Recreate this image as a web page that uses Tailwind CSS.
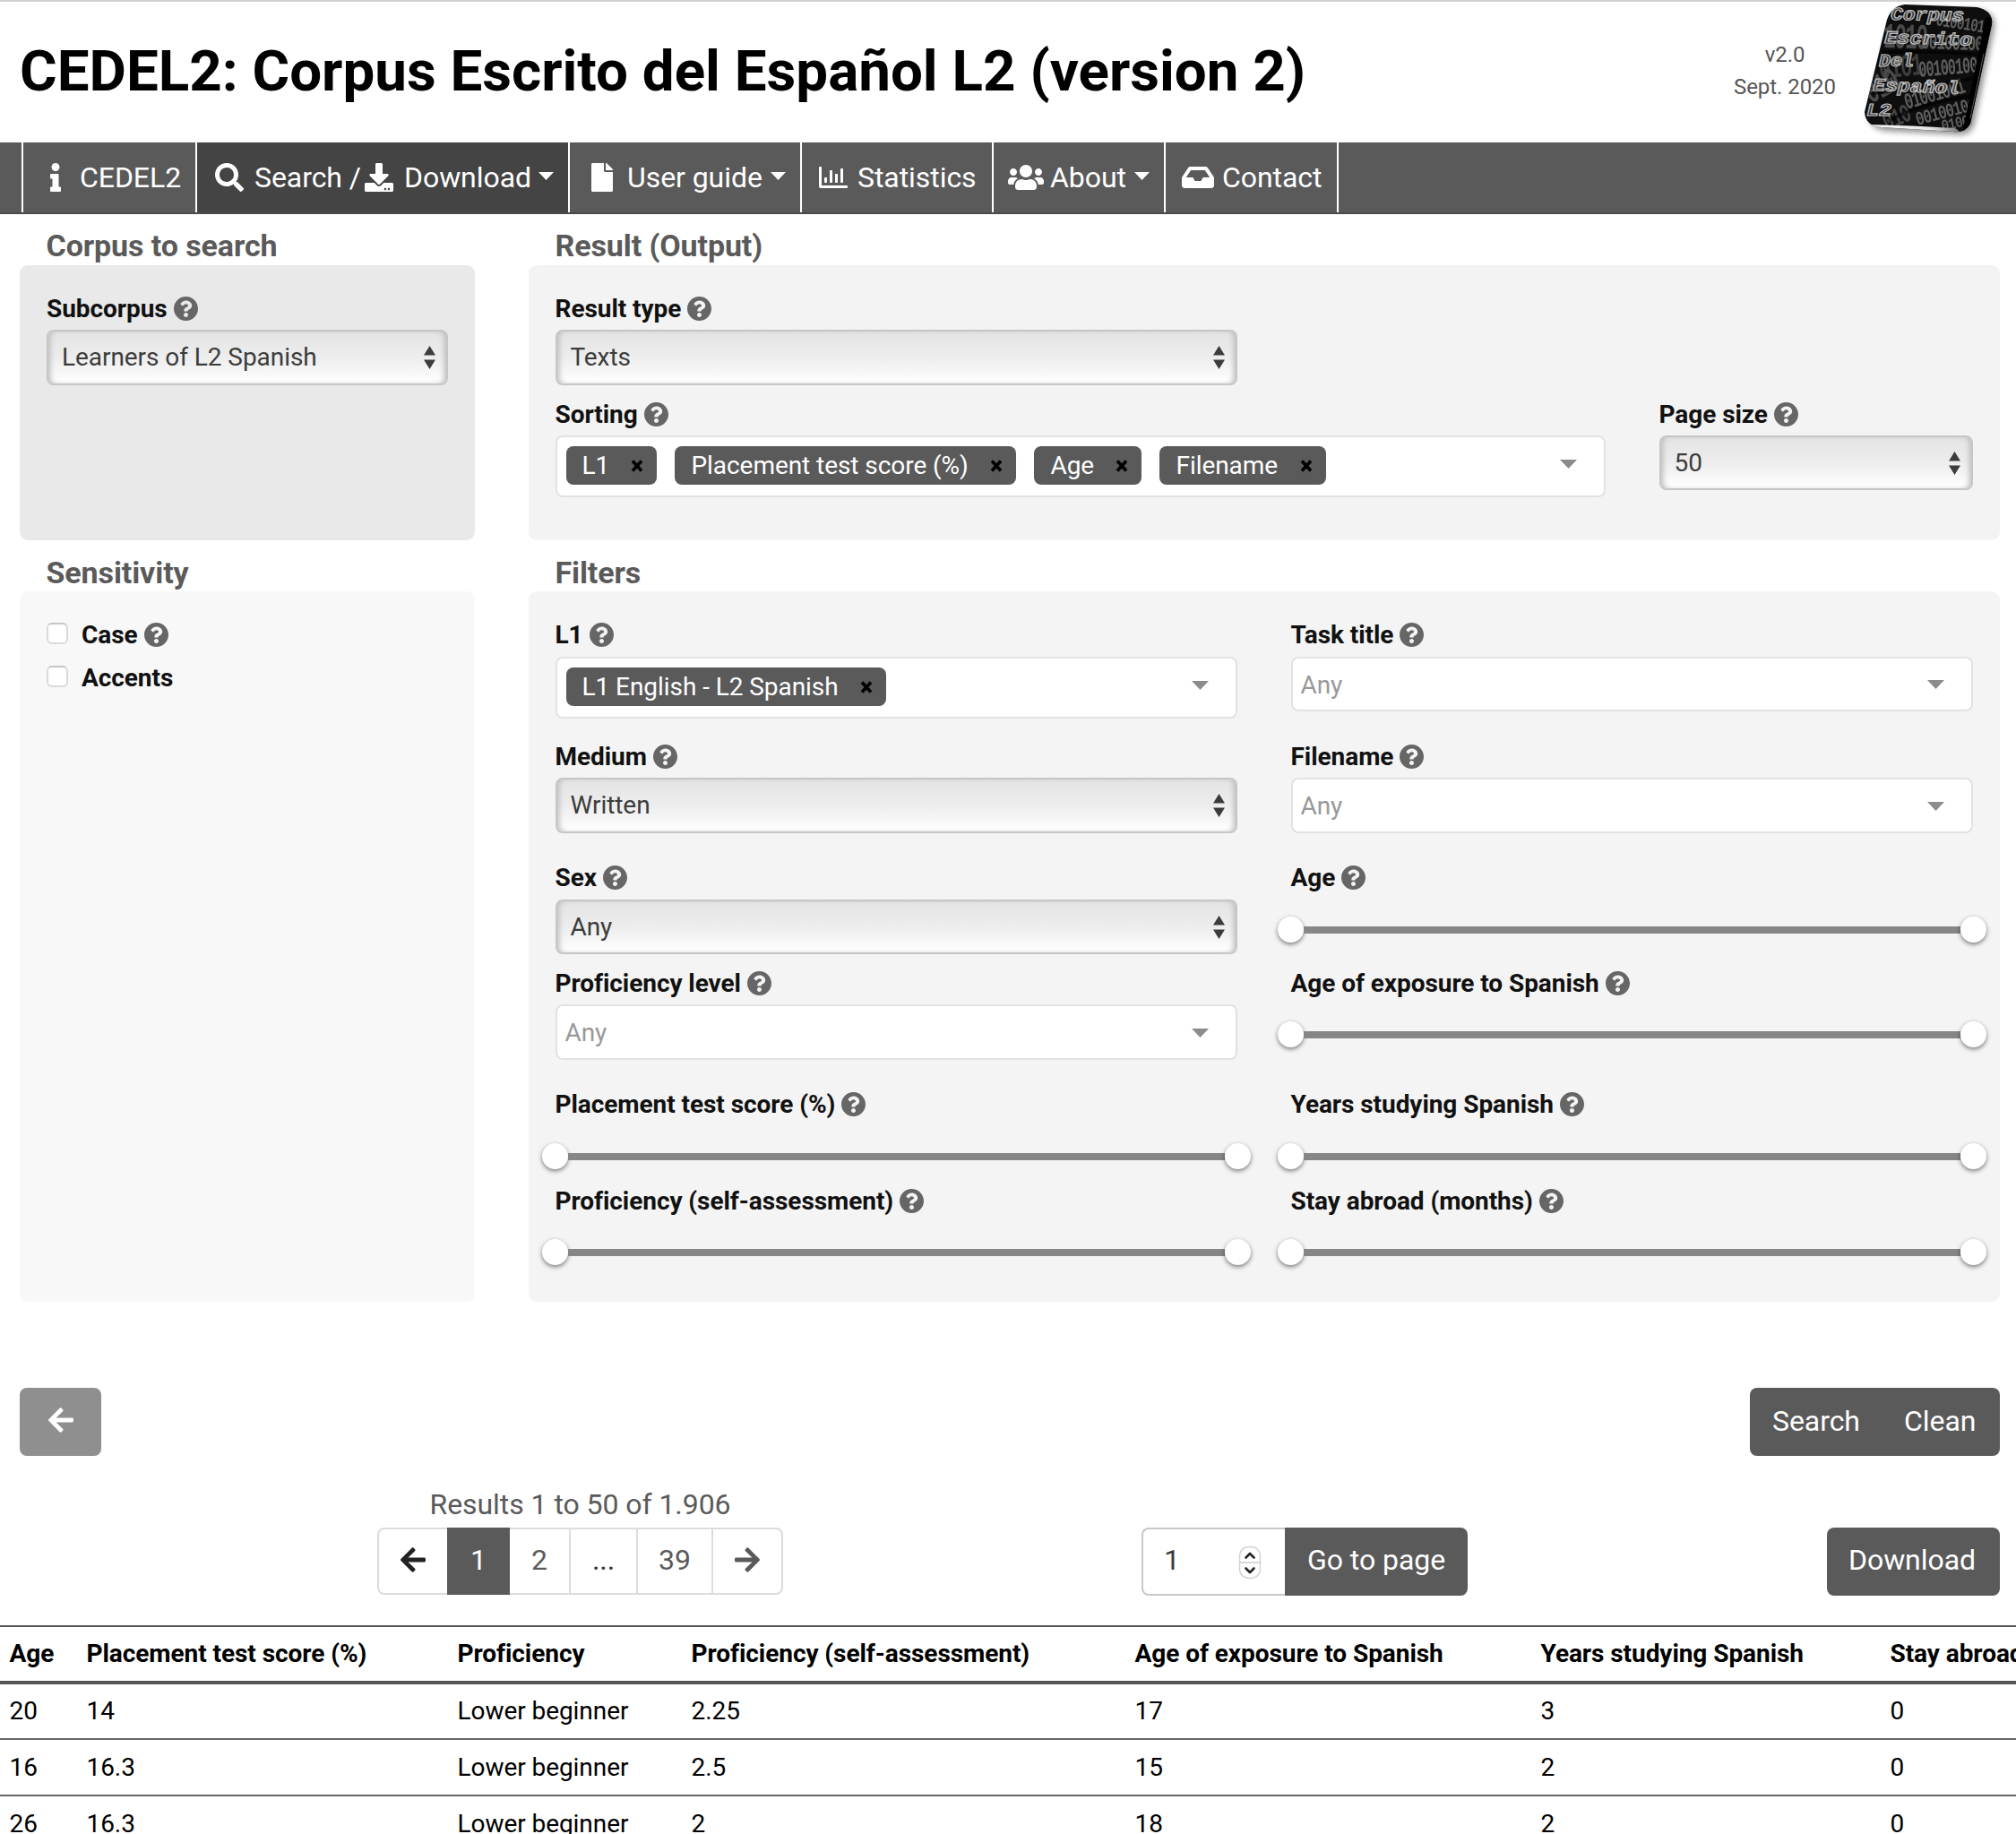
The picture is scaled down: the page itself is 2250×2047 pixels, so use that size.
<!DOCTYPE html>
<html lang="en">
<head>
<meta charset="utf-8">
<title>CEDEL2</title>
<script src="https://cdn.jsdelivr.net/npm/@tailwindcss/browser@4"></script>
</head>
<body class="w-[2250px] h-[2047px] overflow-hidden bg-white font-['Roboto',sans-serif] text-[28px] leading-[42px] tracking-[-0.06px] text-[#111]">

<!-- icon sprite -->
<svg class="hidden">
  <symbol id="q" viewBox="8 8 496 496"><path fill="currentColor" d="M504 256c0 136.997-111.043 248-248 248S8 392.997 8 256C8 119.083 119.043 8 256 8s248 111.083 248 248zM262.655 90c-54.497 0-89.255 22.957-116.549 63.758-3.536 5.286-2.353 12.415 2.715 16.258l34.699 26.31c5.205 3.947 12.621 3.008 16.665-2.122 17.864-22.658 30.113-35.797 57.303-35.797 20.429 0 45.698 13.148 45.698 32.958 0 14.976-12.363 22.667-32.534 33.976C247.128 238.528 216 254.941 216 296v4c0 6.627 5.373 12 12 12h56c6.627 0 12-5.373 12-12v-1.333c0-28.462 83.186-29.647 83.186-106.667 0-58.002-60.165-102-116.531-102zM256 338c-25.365 0-46 20.635-46 46 0 25.364 20.635 46 46 46s46-20.636 46-46c0-25.365-20.635-46-46-46z"/></symbol>
  <symbol id="left" viewBox="0 0 448 512"><path fill="currentColor" d="M257.5 445.1l-22.2 22.2c-9.4 9.4-24.6 9.4-33.9 0L7 273c-9.4-9.4-9.4-24.6 0-33.9L201.4 44.7c9.4-9.4 24.6-9.4 33.9 0l22.2 22.2c9.5 9.5 9.3 25-.4 34.3L136.6 216H424c13.3 0 24 10.7 24 24v32c0 13.3-10.7 24-24 24H136.6l120.5 114.8c9.8 9.3 10 24.8.4 34.3z"/></symbol>
  <symbol id="ud" viewBox="0 0 13 26"><path fill="#3c3c3c" d="M6.5 0L13 10.500H0zM0 15.500h13L6.500 26z"/></symbol>
  <symbol id="dn" viewBox="0 0 19 10"><path fill="currentColor" d="M0 0h19l-9.500 10z"/></symbol>
  <symbol id="x" viewBox="0 0 14 14"><path stroke="#000" stroke-width="3.600" d="M2 1.500l10 11M12 1.500l-10 11"/></symbol>
</svg>

<header class="flex h-[159px] border-t-2 border-[#d2d2d2] pl-[22px]">
  <h1 class="mt-[30px] w-[1829px] text-[63.7px] leading-[96px] font-bold tracking-normal text-black">CEDEL2: Corpus Escrito del Español L2 (version 2)</h1>
  <div class="mt-[41px] w-[282px] text-center text-2xl leading-9 text-[#565656]">v2.0<br>Sept. 2020</div>
  <svg class="-ml-[73px] -mt-[2px]" width="190" height="159" viewBox="0 0 190 159">
    <defs>
      <clipPath id="tile"><path d="M66 5L146 8Q165 12 163 27L139 138Q133 149 120 147L40 142Q22 141 21 125L46 22Q51 7 66 5Z"/></clipPath>
      <filter id="soft" x="-20%" y="-20%" width="140%" height="140%"><feGaussianBlur stdDeviation="3.500"/></filter>
      <filter id="haze"><feGaussianBlur stdDeviation=".6"/></filter>
      <linearGradient id="edge" x1="0" x2="1"><stop offset="0" stop-color="#fff"/><stop offset=".7" stop-color="#e4e4e4"/><stop offset="1" stop-color="#777"/></linearGradient>
    </defs>
    <path filter="url(#soft)" opacity=".45" fill="#000" d="M70 9L149 11Q168 15 166 30L143 140Q138 152 124 150L45 146Q27 144 26 128L50 24Q56 10 70 9Z"/>
    <g clip-path="url(#tile)">
      <path fill="#0e0e0e" d="M0 0h190v159H0z"/>
      <g filter="url(#haze)" fill="#5e5e5e" font-family="Liberation Mono" font-weight="bold" font-size="16" letter-spacing="-1">
        <text transform="translate(100 28) rotate(9) scale(.9 1.300)">0100101</text>
        <text transform="translate(42 53) rotate(2) scale(1.400 2.500)" fill="#4c4c4c">1010</text>
        <text transform="translate(84 54) rotate(2) scale(1 1.500)">001001001</text>
        <text transform="translate(38 88) rotate(-6) scale(1.400 2.200)" fill="#3c3c3c">0101</text>
        <text transform="translate(82 86) rotate(-5) scale(.95 1.600)">001001001</text>
        <text transform="translate(68 122) rotate(-16) scale(1 1.600)">01001001</text>
        <text transform="translate(28 116) rotate(-28) scale(1.500 2.500)" fill="#4c4c4c">010</text>
        <text transform="translate(80 140) rotate(-15) scale(1 1.350)">00100101</text>
        <text transform="translate(108 146) rotate(-12) scale(.9 1.100)">01001</text>
        <text transform="translate(46 146) rotate(-24) scale(1.200 1.800)" fill="#444">010</text>
      </g>
      <path fill="none" stroke="#000" stroke-opacity=".6" stroke-width="4" d="M40 58Q100 56 160 62M30 104Q90 98 150 86M50 134Q90 112 150 106"/>
      <path stroke="#000" stroke-width="12" d="M162 20L136 150"/>
      <path stroke="#555" stroke-width="1" d="M154 60L139 132"/>
      <path fill="url(#edge)" d="M25 139Q75 140 121 143Q126 144 128 150L20 152Z"/>
      <g fill="#3a3a3a" stroke="#c2c2c2" stroke-width="1.100" font-family="Liberation Mono" font-weight="bold" font-style="italic" font-size="20">
        <text transform="translate(50 22) rotate(1)" textLength="82" lengthAdjust="spacingAndGlyphs">Corpus</text>
        <text transform="translate(43 48) rotate(1.500)" textLength="98" lengthAdjust="spacingAndGlyphs">Escrito</text>
        <text transform="translate(37 74)" textLength="39" lengthAdjust="spacingAndGlyphs">Del</text>
        <text transform="translate(30 101) rotate(2)" textLength="97" lengthAdjust="spacingAndGlyphs">Español</text>
        <text transform="translate(23 129)" textLength="28" lengthAdjust="spacingAndGlyphs">L2</text>
      </g>
    </g>
  </svg>
</header>

<nav class="flex h-[80px] items-stretch border-b-2 border-[#4a4a4a] bg-[#5a5a5a] pl-6 text-[32px] leading-[76px] whitespace-nowrap text-white">
  <a class="flex w-[194px] items-center border-l-2 border-white pl-[30px]">
    <svg width="12" height="32" viewBox="0 0 192 512"><path fill="currentColor" d="M20 424.229h20V279.771H20c-11.046 0-20-8.954-20-20V212c0-11.046 8.954-20 20-20h112c11.046 0 20 8.954 20 20v212.229h20c11.046 0 20 8.954 20 20V492c0 11.046-8.954 20-20 20H20c-11.046 0-20-8.954-20-20v-47.771c0-11.046 8.954-20 20-20zM96 0C56.235 0 24 32.235 24 72s32.235 72 72 72 72-32.235 72-72S135.764 0 96 0z"/></svg>
    <span class="ml-[21px]">CEDEL2</span>
  </a>
  <a class="flex w-[416px] items-center border-l-2 border-white bg-[#444] pl-5">
    <svg width="32" height="32" viewBox="0 0 512 512"><path fill="currentColor" d="M505 442.700L405.300 343c-4.500-4.500-10.600-7-17-7H372c27.600-35.300 44-79.700 44-128C416 93.100 322.900 0 208 0S0 93.100 0 208s93.100 208 208 208c48.300 0 92.700-16.400 128-44v16.300c0 6.400 2.500 12.500 7 17l99.700 99.700c9.400 9.400 24.600 9.400 33.900 0l28.300-28.300c9.400-9.400 9.400-24.600.1-34zM208 336c-70.700 0-128-57.200-128-128 0-70.700 57.200-128 128-128 70.700 0 128 57.200 128 128 0 70.700-57.200 128-128 128z"/></svg>
    <span class="ml-[12px] w-[123px]">Search /</span>
    <svg width="32" height="32" viewBox="0 0 512 512"><path fill="currentColor" d="M216 0h80c13.300 0 24 10.700 24 24v168h87.700c17.800 0 26.700 21.500 14.100 34.100L269.700 378.300c-7.500 7.500-19.800 7.500-27.300 0L90.100 226.100c-12.600-12.600-3.700-34.100 14.100-34.100H192V24c0-13.300 10.700-24 24-24zm296 376v112c0 13.300-10.700 24-24 24H24c-13.300 0-24-10.700-24-24V376c0-13.300 10.700-24 24-24h146.700l49 49c20.100 20.100 52.500 20.100 72.600 0l49-49H488c13.300 0 24 10.700 24 24zm-124 88c0-11-9-20-20-20s-20 9-20 20 9 20 20 20 20-9 20-20zm64 0c0-11-9-20-20-20s-20 9-20 20 9 20 20 20 20-9 20-20z"/></svg>
    <span class="ml-[12px] w-[150px]">Download</span>
    <svg class="mb-1" width="17" height="9" viewBox="0 0 19 10"><use href="#dn"/></svg>
  </a>
  <a class="flex w-[259px] items-center border-l-2 border-white pl-[24px]">
    <svg width="24" height="32" viewBox="0 0 384 512"><path fill="currentColor" d="M224 136V0H24C10.700 0 0 10.700 0 24v464c0 13.300 10.700 24 24 24h336c13.300 0 24-10.700 24-24V160H248c-13.200 0-24-10.800-24-24zm160-14.100v6.100H256V0h6.100c6.400 0 12.500 2.500 17 7l97.900 98c4.500 4.500 7 10.600 7 16.900z"/></svg>
    <span class="ml-[16px] w-[160px]">User guide</span>
    <svg class="mb-1" width="17" height="9" viewBox="0 0 19 10"><use href="#dn"/></svg>
  </a>
  <a class="flex w-[214px] items-center border-l-2 border-white pl-[19px]">
    <svg width="32" height="32" viewBox="0 0 512 512"><path fill="currentColor" d="M396.800 352h22.400c6.400 0 12.800-6.400 12.800-12.800V108.800c0-6.400-6.400-12.800-12.800-12.800h-22.400c-6.400 0-12.800 6.400-12.800 12.800v230.400c0 6.400 6.400 12.800 12.800 12.800zm-192 0h22.400c6.400 0 12.800-6.400 12.800-12.800V140.800c0-6.400-6.400-12.800-12.800-12.800h-22.400c-6.400 0-12.800 6.400-12.800 12.800v198.400c0 6.400 6.400 12.800 12.800 12.800zm96 0h22.400c6.400 0 12.800-6.400 12.800-12.800V204.800c0-6.400-6.400-12.800-12.800-12.800h-22.400c-6.400 0-12.800 6.400-12.800 12.800v134.400c0 6.400 6.400 12.800 12.800 12.800zM496 400H48V80c0-8.840-7.160-16-16-16H16C7.160 64 0 71.160 0 80v336c0 17.670 14.330 32 32 32h464c8.840 0 16-7.160 16-16v-16c0-8.840-7.160-16-16-16zm-387.200-48h22.400c6.400 0 12.800-6.400 12.800-12.800v-70.400c0-6.400-6.400-12.800-12.800-12.800h-22.400c-6.400 0-12.800 6.400-12.800 12.800v70.400c0 6.400 6.400 12.800 12.800 12.800z"/></svg>
    <span class="ml-[11px]">Statistics</span>
  </a>
  <a class="flex w-[192px] items-center border-l-2 border-white pl-[16px]">
    <svg width="40" height="32" viewBox="0 0 640 512"><path fill="currentColor" d="M96 224c35.300 0 64-28.700 64-64s-28.700-64-64-64-64 28.700-64 64 28.700 64 64 64zm448 0c35.300 0 64-28.700 64-64s-28.700-64-64-64-64 28.700-64 64 28.700 64 64 64zm32 32h-64c-17.600 0-33.500 7.100-45.100 18.600 40.300 22.100 68.900 62 75.100 109.400h66c17.700 0 32-14.300 32-32v-32c0-35.300-28.700-64-64-64zm-256 0c61.900 0 112-50.100 112-112S381.900 32 320 32 208 82.100 208 144s50.100 112 112 112zm76.800 32h-8.300c-20.800 10-43.900 16-68.500 16s-47.600-6-68.500-16h-8.300C179.600 288 128 339.600 128 403.200V432c0 26.500 21.500 48 48 48h288c26.500 0 48-21.500 48-48v-28.800c0-63.600-51.600-115.200-115.200-115.200zm-223.700-13.400C161.500 263.100 145.600 256 128 256H64c-35.300 0-64 28.700-64 64v32c0 17.700 14.300 32 32 32h65.900c6.300-47.400 34.900-87.300 75.200-109.400z"/></svg>
    <span class="ml-[7px] w-[94px]">About</span>
    <svg class="mb-1" width="17" height="9" viewBox="0 0 19 10"><use href="#dn"/></svg>
  </a>
  <a class="flex w-[195px] items-center border-x-2 border-white pl-[18px]">
    <svg width="36" height="32" viewBox="0 0 576 512"><path fill="currentColor" d="M567.938 243.908L462.250 85.374A48.003 48.003 0 0 0 422.311 64H153.689a48 48 0 0 0-39.938 21.374L8.062 243.908A47.994 47.994 0 0 0 0 270.533V400c0 26.510 21.490 48 48 48h480c26.510 0 48-21.490 48-48V270.533a47.994 47.994 0 0 0-8.062-26.625zM162.252 128h251.497l85.333 128H376l-32 64H232l-32-64H76.918l85.334-128z"/></svg>
    <span class="ml-[9px]">Contact</span>
  </a>
</nav>

<main class="grid grid-cols-[508px_1642px] gap-x-[60px] pl-[22px]">
  <section>
    <h2 class="h-[57px] pl-[29.5px] pt-[12px] text-[34px] leading-[47px] font-bold tracking-[-0.1px] text-[#5a5a5a]">Corpus to search</h2>
    <div class="h-[307px] rounded-[9px] bg-[#e9e9e9] px-[30px] pt-[28px]">
      <label class="flex h-[44px] items-start gap-[7px] font-bold">Subcorpus<svg class="mt-[7px] size-[27px] text-[#666]"><use href="#q"/></svg></label>
      <div class="flex h-[62px] items-center justify-between rounded-lg border-2 border-[#c6c6c6] bg-linear-to-b from-[#e4e4e4] via-[#ededed] to-white pr-[12px] pl-[15px] text-[#3c3c3c] shadow-[inset_5px_0_6px_-3px_#bbb,inset_-5px_0_6px_-3px_#bbb]"><span>Learners of L2 Spanish</span><svg class="h-[26px] w-[13px]"><use href="#ud"/></svg></div>
    </div>
  </section>
  <section>
    <h2 class="h-[57px] pl-[29.5px] pt-[12px] text-[34px] leading-[47px] font-bold tracking-[-0.1px] text-[#5a5a5a]">Result (Output)</h2>
    <div class="h-[307px] rounded-[9px] bg-[#f3f3f3] px-[29.5px] pt-[28px]">
      <div class="h-[118px] w-[761px]">
        <label class="flex h-[44px] items-start gap-[7px] font-bold">Result type<svg class="mt-[7px] size-[27px] text-[#666]"><use href="#q"/></svg></label>
        <div class="flex h-[62px] items-center justify-between rounded-lg border-2 border-[#c6c6c6] bg-linear-to-b from-[#e4e4e4] via-[#ededed] to-white pr-[12px] pl-[15px] text-[#3c3c3c] shadow-[inset_5px_0_6px_-3px_#bbb,inset_-5px_0_6px_-3px_#bbb]"><span>Texts</span><svg class="h-[26px] w-[13px]"><use href="#ud"/></svg></div>
      </div>
      <div class="grid grid-cols-[1172px_350px] gap-x-[60px]">
        <div>
          <label class="flex h-[44px] items-start gap-[7px] font-bold">Sorting<svg class="mt-[7px] size-[27px] text-[#666]"><use href="#q"/></svg></label>
          <div class="flex h-[69px] gap-[20px] rounded-lg border-2 border-[#e2e2e2] bg-white pt-[10px] pl-[10px] leading-[44px] text-white">
            <span class="flex h-[43px] w-[101px] items-center justify-between rounded-lg bg-[#5a5a5a] pr-[15px] pl-[18px]">L1<svg class="mt-px size-[14px]"><use href="#x"/></svg></span>
            <span class="flex h-[43px] w-[381px] items-center justify-between rounded-lg bg-[#5a5a5a] pr-[15px] pl-[19px]">Placement test score (%)<svg class="mt-px size-[14px]"><use href="#x"/></svg></span>
            <span class="flex h-[43px] w-[120px] items-center justify-between rounded-lg bg-[#5a5a5a] pr-[15px] pl-[19px]">Age<svg class="mt-px size-[14px]"><use href="#x"/></svg></span>
            <span class="flex h-[43px] w-[186px] items-center justify-between rounded-lg bg-[#5a5a5a] pr-[15px] pl-[19px]">Filename<svg class="mt-px size-[14px]"><use href="#x"/></svg></span>
            <svg class="mt-[15px] mr-[30px] ml-auto h-[10px] w-[19px] text-[#8c8c8c]"><use href="#dn"/></svg>
          </div>
        </div>
        <div>
          <label class="flex h-[44px] items-start gap-[7px] font-bold">Page size<svg class="mt-[7px] size-[27px] text-[#666]"><use href="#q"/></svg></label>
          <div class="flex h-[61px] items-center justify-between rounded-lg border-2 border-[#c6c6c6] bg-linear-to-b from-[#e4e4e4] via-[#ededed] to-white pr-[12px] pl-[15px] text-[#3c3c3c] shadow-[inset_5px_0_6px_-3px_#bbb,inset_-5px_0_6px_-3px_#bbb]"><span>50</span><svg class="h-[26px] w-[13px]"><use href="#ud"/></svg></div>
        </div>
      </div>
    </div>
  </section>

  <section>
    <h2 class="h-[57px] pl-[29.5px] pt-[12px] text-[34px] leading-[48px] font-bold tracking-[-0.1px] text-[#5a5a5a]">Sensitivity</h2>
    <div class="h-[793px] rounded-[9px] bg-[#f8f8f8] px-[30px] pt-[28px] font-bold">
      <div class="flex h-[48px] items-start"><i class="mt-[7px] mr-[15px] size-6 rounded-md border-2 border-[#dadada] border-t-[#c4c4c4] bg-white"></i>Case<svg class="mt-[7px] ml-[7px] size-[27px] text-[#666]"><use href="#q"/></svg></div>
      <div class="flex h-[48px] items-start"><i class="mt-[7px] mr-[15px] size-6 rounded-md border-2 border-[#dadada] border-t-[#c4c4c4] bg-white"></i>Accents</div>
    </div>
  </section>
  <section>
    <h2 class="h-[57px] pl-[29.5px] pt-[12px] text-[34px] leading-[48px] font-bold tracking-[-0.1px] text-[#5a5a5a]">Filters</h2>
    <div class="grid h-[793px] grid-cols-[761px_761px] grid-rows-[136px_135px_118px_135px_108px_auto] gap-x-[60px] rounded-[9px] bg-[#f4f4f4] px-[29.5px] pt-[28px]">
      <div>
        <label class="flex h-[45px] items-start gap-[7px] font-bold">L1<svg class="mt-[7px] size-[27px] text-[#666]"><use href="#q"/></svg></label>
        <div class="flex h-[69px] rounded-lg border-2 border-[#e2e2e2] bg-white pt-[10px] pl-[10px] leading-[44px] text-white">
          <span class="flex h-[43px] w-[357px] items-center justify-between rounded-lg bg-[#5a5a5a] pr-[15px] pl-[18px]">L1 English - L2 Spanish<svg class="mt-px size-[14px]"><use href="#x"/></svg></span>
          <svg class="mt-[15px] mr-[30px] ml-auto h-[10px] w-[19px] text-[#8c8c8c]"><use href="#dn"/></svg>
        </div>
      </div>
      <div>
        <label class="flex h-[45px] items-start gap-[7px] font-bold">Task title<svg class="mt-[7px] size-[27px] text-[#666]"><use href="#q"/></svg></label>
        <div class="flex h-[61px] items-center justify-between rounded-lg border-2 border-[#e2e2e2] bg-white pr-[30px] pl-[9px] text-[#999]"><span class="mt-0.5">Any</span><svg class="mt-px h-[10px] w-[19px] text-[#8c8c8c]"><use href="#dn"/></svg></div>
      </div>
      <div>
        <label class="flex h-[44px] items-start gap-[7px] font-bold">Medium<svg class="mt-[7px] size-[27px] text-[#666]"><use href="#q"/></svg></label>
        <div class="flex h-[62px] items-center justify-between rounded-lg border-2 border-[#c6c6c6] bg-linear-to-b from-[#e4e4e4] via-[#ededed] to-white pr-[12px] pl-[15px] text-[#3c3c3c] shadow-[inset_5px_0_6px_-3px_#bbb,inset_-5px_0_6px_-3px_#bbb]"><span>Written</span><svg class="h-[26px] w-[13px]"><use href="#ud"/></svg></div>
      </div>
      <div>
        <label class="flex h-[44px] items-start gap-[7px] font-bold">Filename<svg class="mt-[7px] size-[27px] text-[#666]"><use href="#q"/></svg></label>
        <div class="flex h-[62px] items-center justify-between rounded-lg border-2 border-[#e2e2e2] bg-white pr-[30px] pl-[9px] text-[#999]"><span class="mt-0.5">Any</span><svg class="mt-px h-[10px] w-[19px] text-[#8c8c8c]"><use href="#dn"/></svg></div>
      </div>
      <div>
        <label class="flex h-[45px] items-start gap-[7px] font-bold">Sex<svg class="mt-[7px] size-[27px] text-[#666]"><use href="#q"/></svg></label>
        <div class="flex h-[61px] items-center justify-between rounded-lg border-2 border-[#c6c6c6] bg-linear-to-b from-[#e4e4e4] via-[#ededed] to-white pr-[12px] pl-[15px] text-[#3c3c3c] shadow-[inset_5px_0_6px_-3px_#bbb,inset_-5px_0_6px_-3px_#bbb]"><span>Any</span><svg class="h-[26px] w-[13px]"><use href="#ud"/></svg></div>
      </div>
      <div>
        <label class="flex h-[64px] items-start gap-[7px] font-bold">Age<svg class="mt-[7px] size-[27px] text-[#666]"><use href="#q"/></svg></label>
        <div class="-mx-[15px] flex items-center"><i class="size-[29px] rounded-full bg-white shadow-[0_2px_5px_rgba(0,0,0,.5)]"></i><i class="h-2 flex-1 bg-[#868686]"></i><i class="size-[29px] rounded-full bg-white shadow-[0_2px_5px_rgba(0,0,0,.5)]"></i></div>
      </div>
      <div>
        <label class="flex h-[44px] items-start gap-[7px] font-bold">Proficiency level<svg class="mt-[7px] size-[27px] text-[#666]"><use href="#q"/></svg></label>
        <div class="flex h-[62px] items-center justify-between rounded-lg border-2 border-[#e2e2e2] bg-white pr-[30px] pl-[9px] text-[#999]"><span class="mt-0.5">Any</span><svg class="mt-px h-[10px] w-[19px] text-[#8c8c8c]"><use href="#dn"/></svg></div>
      </div>
      <div>
        <label class="flex h-[63px] items-start gap-[7px] font-bold">Age of exposure to Spanish<svg class="mt-[7px] size-[27px] text-[#666]"><use href="#q"/></svg></label>
        <div class="-mx-[15px] flex items-center"><i class="size-[29px] rounded-full bg-white shadow-[0_2px_5px_rgba(0,0,0,.5)]"></i><i class="h-2 flex-1 bg-[#868686]"></i><i class="size-[29px] rounded-full bg-white shadow-[0_2px_5px_rgba(0,0,0,.5)]"></i></div>
      </div>
      <div>
        <label class="flex h-[64px] items-start gap-[7px] font-bold">Placement test score (%)<svg class="mt-[7px] size-[27px] text-[#666]"><use href="#q"/></svg></label>
        <div class="-mx-[15px] flex items-center"><i class="size-[29px] rounded-full bg-white shadow-[0_2px_5px_rgba(0,0,0,.5)]"></i><i class="h-2 flex-1 bg-[#868686]"></i><i class="size-[29px] rounded-full bg-white shadow-[0_2px_5px_rgba(0,0,0,.5)]"></i></div>
      </div>
      <div>
        <label class="flex h-[64px] items-start gap-[7px] font-bold">Years studying Spanish<svg class="mt-[7px] size-[27px] text-[#666]"><use href="#q"/></svg></label>
        <div class="-mx-[15px] flex items-center"><i class="size-[29px] rounded-full bg-white shadow-[0_2px_5px_rgba(0,0,0,.5)]"></i><i class="h-2 flex-1 bg-[#868686]"></i><i class="size-[29px] rounded-full bg-white shadow-[0_2px_5px_rgba(0,0,0,.5)]"></i></div>
      </div>
      <div>
        <label class="flex h-[63px] items-start gap-[7px] font-bold">Proficiency (self-assessment)<svg class="mt-[7px] size-[27px] text-[#666]"><use href="#q"/></svg></label>
        <div class="-mx-[15px] flex items-center"><i class="size-[29px] rounded-full bg-white shadow-[0_2px_5px_rgba(0,0,0,.5)]"></i><i class="h-2 flex-1 bg-[#868686]"></i><i class="size-[29px] rounded-full bg-white shadow-[0_2px_5px_rgba(0,0,0,.5)]"></i></div>
      </div>
      <div>
        <label class="flex h-[63px] items-start gap-[7px] font-bold">Stay abroad (months)<svg class="mt-[7px] size-[27px] text-[#666]"><use href="#q"/></svg></label>
        <div class="-mx-[15px] flex items-center"><i class="size-[29px] rounded-full bg-white shadow-[0_2px_5px_rgba(0,0,0,.5)]"></i><i class="h-2 flex-1 bg-[#868686]"></i><i class="size-[29px] rounded-full bg-white shadow-[0_2px_5px_rgba(0,0,0,.5)]"></i></div>
      </div>
    </div>
  </section>
</main>

<div class="mt-[96px] flex h-[76px] justify-between pr-[18px] pl-[22px] text-[32px] leading-[74px] text-white">
  <button class="flex w-[91px] items-center justify-center rounded-lg bg-[#8f8f8f]"><svg class="mb-1 h-[32px] w-[28px]"><use href="#left"/></svg></button>
  <div class="flex rounded-lg bg-[#5a5a5a] pl-[25px]"><span class="w-[147px]">Search</span><span class="w-[107px]">Clean</span></div>
</div>

<div class="flex h-[189px] items-start pt-[32px] pl-[421px] text-[32px] whitespace-nowrap text-[#5a5a5a]">
  <div class="w-[453px]">
    <p class="h-[48px] text-center leading-[45px]">Results 1 to 50 of 1.906</p>
    <div class="flex h-[75px] rounded-lg border-2 border-[#dcdcdc] text-center leading-[68px]">
      <span class="flex w-[76px] items-center justify-center text-[#222]"><svg class="mb-1 h-[32px] w-[28px]"><use href="#left"/></svg></span>
      <span class="-my-[2px] w-[70px] bg-[#5a5a5a] pt-[2px] text-white">1</span>
      <span class="w-[66px]">2</span>
      <span class="w-[75px] border-l-2 border-[#dcdcdc] text-[#333]">...</span>
      <span class="w-[86px] border-x-2 border-[#dcdcdc]">39</span>
      <span class="flex flex-1 items-center justify-center"><svg class="mb-1 h-[32px] w-[28px] -scale-x-100"><use href="#left"/></svg></span>
    </div>
  </div>
  <div class="mt-[48px] ml-[400px] flex h-[76px] w-[364px] leading-[74px]">
    <div class="flex w-[160px] items-center justify-between rounded-l-lg border-2 border-r-0 border-[#c8c8c8] pr-[27px] pl-[23px] leading-[68px] text-[#3c3c3c]">
      <span class="-mt-1">1</span>
      <svg class="mt-[2px] overflow-visible" width="24" height="36" viewBox="0 0 24 36"><rect x=".5" y=".5" width="23" height="35" rx="10" fill="#fff" stroke="#d4d4d4" stroke-width="1.500"/><path stroke="#ccc" stroke-width="1.500" d="M0 18h24"/><path fill="none" stroke="#222" stroke-width="2.600" stroke-linecap="round" stroke-linejoin="round" d="M7.500 12.500l4.500-4.500 4.500 4.500M7.500 24.500l4.500 4.500 4.500-4.500"/></svg>
    </div>
    <span class="w-[204px] rounded-r-lg bg-[#5a5a5a] pl-[25px] leading-[73px] text-white">Go to page</span>
  </div>
  <span class="mt-[48px] ml-[401px] h-[76px] w-[193px] rounded-lg bg-[#5a5a5a] pl-[24px] leading-[73px] text-white">Download</span>
</div>

<table class="w-[2250px] table-fixed border-collapse text-left whitespace-nowrap text-black">
  <colgroup><col class="w-[86px]"><col class="w-[414px]"><col class="w-[261px]"><col class="w-[495px]"><col class="w-[453px]"><col class="w-[390px]"><col></colgroup>
  <thead>
    <tr class="h-[63px] border-t-2 border-b-4 border-[#555] [&>th]:pl-[10.5px] [&>th]:font-bold"><th>Age</th><th>Placement test score (%)</th><th>Proficiency</th><th>Proficiency (self-assessment)</th><th>Age of exposure to Spanish</th><th>Years studying Spanish</th><th>Stay abroad (months)</th></tr>
  </thead>
  <tbody class="[&_td]:pl-[10.5px]">
    <tr class="h-[63px] border-b-2 border-[#666]"><td>20</td><td>14</td><td>Lower beginner</td><td>2.25</td><td>17</td><td>3</td><td>0</td></tr>
    <tr class="h-[63px] border-b-2 border-[#666]"><td>16</td><td>16.3</td><td>Lower beginner</td><td>2.5</td><td>15</td><td>2</td><td>0</td></tr>
    <tr class="h-[63px] border-b-2 border-[#666]"><td>26</td><td>16.3</td><td>Lower beginner</td><td>2</td><td>18</td><td>2</td><td>0</td></tr>
  </tbody>
</table>
</body>
</html>
